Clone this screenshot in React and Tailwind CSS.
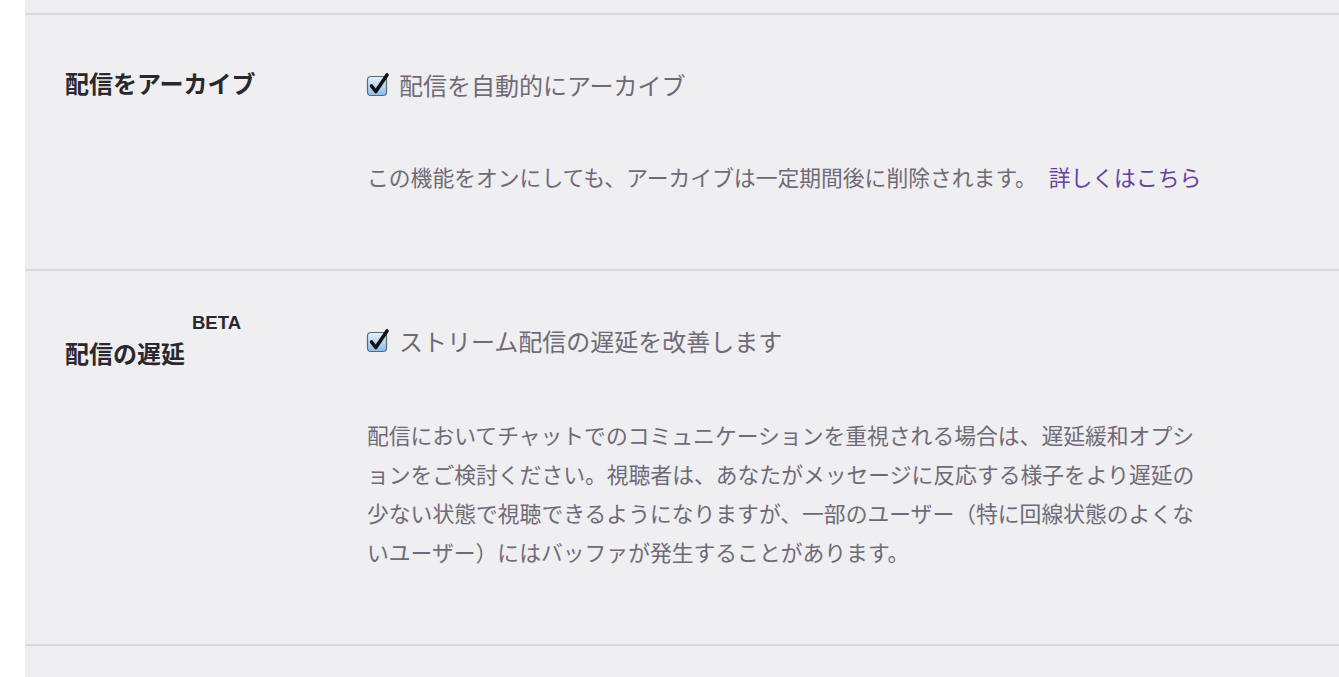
const jp = {
  fontFamily:
    '"Noto Sans CJK JP", "Noto Sans", "Liberation Sans", sans-serif',
};

function CheckMark() {
  return (
    <svg width="26" height="26" viewBox="0 0 26 26" className="shrink-0 -ml-[2px]">
      <defs>
        <linearGradient id="cb" x1="0" y1="0" x2="0" y2="1">
          <stop offset="0" stopColor="#e8f1fb" />
          <stop offset="0.5" stopColor="#bcd8f4" />
          <stop offset="1" stopColor="#8dbdee" />
        </linearGradient>
      </defs>
      <rect x="2.5" y="4.5" width="19" height="19" rx="3.5" fill="url(#cb)" stroke="#56697f" strokeWidth="1.2" />
      <path
        d="M6.5 14 L10.8 19.5 L22 3"
        fill="none"
        stroke="#101216"
        strokeWidth="3.6"
        strokeLinecap="round"
        strokeLinejoin="round"
      />
    </svg>
  );
}

function Toggle({ label }) {
  return (
    <label className="flex items-center gap-[8px] h-[36px] text-[24px] leading-[36px] text-[#6f6a78]">
      <CheckMark />
      <span>{label}</span>
    </label>
  );
}

function Row({ heading, children }) {
  return (
    <section className="flex border-t-2 border-[#dad8de] pl-10 pt-[52px] pb-[73px]">
      <div className="w-[302px] shrink-0">{heading}</div>
      <div className="w-[845px]">{children}</div>
    </section>
  );
}

export default function App() {
  return (
    <div className="min-h-screen bg-white pl-[25px]" style={jp}>
      <div className="min-h-[677px] bg-[#efeef1]">
        <div className="h-[13px]" />

        <Row
          heading={
            <h3 className="text-[24px] leading-[32px] font-bold text-[#2a282e]">
              配信をアーカイブ
            </h3>
          }
        >
          <Toggle label="配信を自動的にアーカイブ" />
          <p className="mt-[54px] text-[21.8px] leading-[39px] text-[#6f6a78] [line-break:loose]">
            この機能をオンにしても、アーカイブは一定期間後に削除されます。{" "}
            <a href="#" className="ml-[7px] text-[#6441a4]">
              詳しくはこちら
            </a>
          </p>
        </Row>

        <Row
          heading={
            <div className="flex items-start">
              <h3 className="mt-[12px] text-[24px] leading-[36px] font-bold text-[#2a282e]">
                配信の遅延
              </h3>
              <span
                className="ml-[7px] -mt-[11px] text-[18.5px] leading-[22px] font-bold text-[#2a282e]"
                style={{ fontFamily: '"Liberation Sans", Arial, sans-serif' }}
              >
                BETA
              </span>
            </div>
          }
        >
          <Toggle label="ストリーム配信の遅延を改善します" />
          <p className="mt-[56px] text-[21.8px] leading-[39px] text-[#6f6a78] [line-break:loose]">
            配信においてチャットでのコミュニケーションを重視される場合は、遅延緩和オプションをご検討ください。視聴者は、あなたがメッセージに反応する様子をより遅延の少ない状態で視聴できるようになりますが、一部のユーザー（特に回線状態のよくないユーザー）にはバッファが発生することがあります。
          </p>
        </Row>

        <div className="border-t-2 border-[#dad8de] h-[40px]" />
      </div>
    </div>
  );
}
